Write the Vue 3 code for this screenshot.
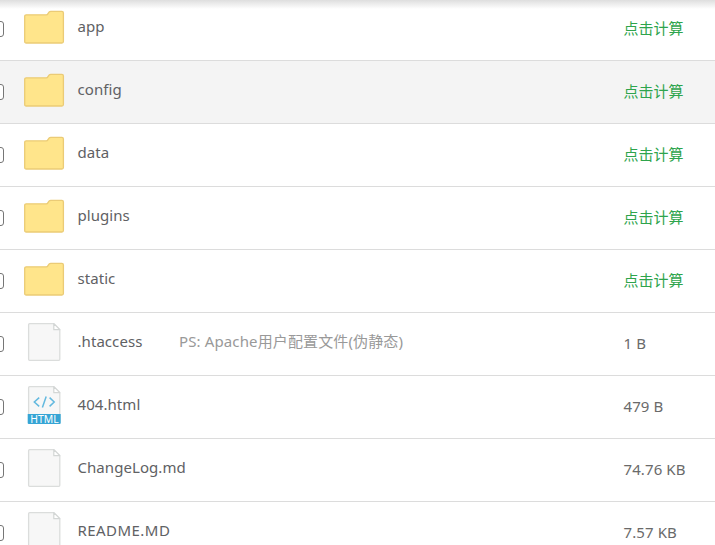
<script setup>
const rows = [
  { name: 'app', type: 'folder' },
  { name: 'config', type: 'folder', active: true },
  { name: 'data', type: 'folder' },
  { name: 'plugins', type: 'folder' },
  { name: 'static', type: 'folder' },
  { name: '.htaccess', type: 'file', note: 'PS: Apache用户配置文件(伪静态)', size: '1 B' },
  { name: '404.html', type: 'html', size: '479 B' },
  { name: 'ChangeLog.md', type: 'file', size: '74.76 KB' },
  { name: 'README.MD', type: 'file', size: '7.57 KB', caps: true },
]
</script>

<template>
  <main class="viewport">
    <div class="top-shadow"></div>
    <ul class="list">
      <li v-for="row in rows" :key="row.name" class="row" :class="{ active: row.active }">
        <span class="check"></span>
        <svg v-if="row.type === 'folder'" class="icon" viewBox="0 0 42 40">
          <path d="M1.7 9.3Q1.7 7.8 3.2 7.8H23.2Q24.4 7.8 25 6.6L26 5.2Q26.6 4.4 27.8 4.4H38.9Q40.4 4.4 40.4 5.9V34.5Q40.4 36 38.9 36H3.2Q1.7 36 1.7 34.5Z" fill="#ffe58b" stroke="#ebcb76" stroke-width="1.3" />
        </svg>
        <svg v-else class="icon" viewBox="0 0 42 40">
          <path d="M6.6 1.7H30.8L36.8 7.7V37.3Q36.8 38.3 35.8 38.3H6.6Q5.6 38.3 5.6 37.3V2.7Q5.6 1.7 6.6 1.7Z" fill="#f7f7f7" stroke="#dbdddc" stroke-width="1.3" stroke-linejoin="round" />
          <path d="M30.8 1.7V7.7H36.8Z" fill="#fff" stroke="#d3d6d5" stroke-width="1.2" stroke-linejoin="round" />
          <g v-if="row.type === 'html'">
            <path d="M16.2 12.6L11.3 17L16.2 21.4M26.6 12.6L31.2 17L26.6 21.4M23.2 11.4L19.4 22.4" fill="none" stroke="#63b9df" stroke-width="1.5" />
            <path d="M4.7 29H37.7V37.9Q37.7 39 36.6 39H5.8Q4.7 39 4.7 37.9Z" fill="#36a5d5" />
            <text x="21.5" y="37.7" text-anchor="middle" textLength="28.5" lengthAdjust="spacingAndGlyphs" class="badge">HTML</text>
          </g>
        </svg>
        <span class="name" :class="{ caps: row.caps }">{{ row.name }}</span>
        <span class="note">{{ row.note }}</span>
        <a v-if="row.type === 'folder'" class="size calc">点击计算</a>
        <span v-else class="size">{{ row.size }}</span>
      </li>
    </ul>
  </main>
</template>

<style>
body {
  background: #fff;
}
</style>

<style scoped>
.viewport {
  position: relative;
  height: 545px;
  overflow: hidden;
  background: #fff;
  font-family: "Noto Sans", "Noto Sans CJK SC", sans-serif;
  font-size: 15px;
  line-height: 22px;
  color: #5c5c5c;
}
.top-shadow {
  position: absolute;
  inset: 0 0 auto;
  height: 9px;
  background: linear-gradient(#dedede, rgba(255, 255, 255, 0));
}
.list {
  list-style: none;
  margin: -2px 0 0;
  padding: 0;
}
.row {
  display: grid;
  grid-template-columns: 4px 19px 42px 12.5px 101.5px 444.5px 91.5px;
  height: 63px;
  box-sizing: border-box;
  border-bottom: 1px solid #dcdcdc;
  white-space: nowrap;
}
.row.active {
  background: #f4f4f4;
}
.check {
  grid-column: 1;
  width: 16px;
  height: 16px;
  margin: 23px 0 0 -12px;
  box-sizing: border-box;
  border: 1px solid #767676;
  border-radius: 3px;
  background: #fff;
}
.icon {
  grid-column: 3;
  width: 42px;
  height: 40px;
  margin-top: 9px;
}
.name {
  grid-column: 5;
  margin-top: 17px;
  color: #606164;
  letter-spacing: 0.06px;
}
.name.caps {
  letter-spacing: 0.45px;
}
.note {
  grid-column: 6;
  margin-top: 17px;
  color: #999;
  letter-spacing: 0.13px;
}
.size {
  grid-column: 7;
  margin-top: 19px;
  color: #6a6a6a;
  letter-spacing: 0.1px;
}
.calc {
  color: #2ea44c;
  letter-spacing: 0;
}
.badge {
  font: 400 10.3px "Noto Sans", sans-serif;
  fill: #fff;
}
</style>
